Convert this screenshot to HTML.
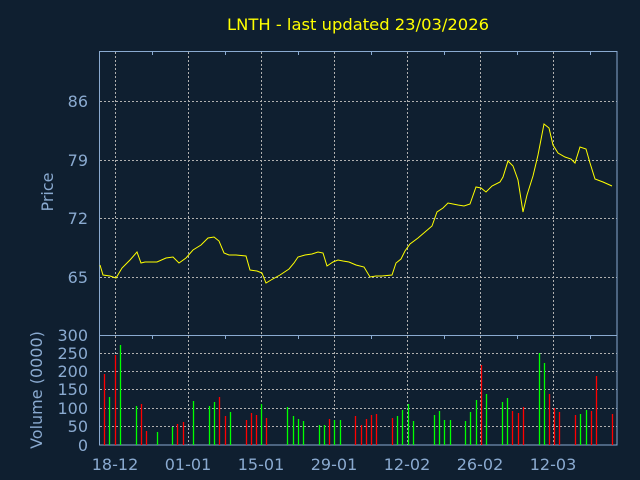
<!DOCTYPE html>
<html><head><meta charset="utf-8"><style>
html,body{margin:0;padding:0;background:#0f1f30;}
svg{display:block}
text{font-family:"DejaVu Sans","Liberation Sans",sans-serif;}
</style></head><body>
<svg width="640" height="480" viewBox="0 0 640 480" xmlns="http://www.w3.org/2000/svg">
<rect width="640" height="480" fill="#0f1f30"/>
<text x="358" y="30" fill="#ffff00" font-size="16" text-anchor="middle" textLength="262" lengthAdjust="spacingAndGlyphs">LNTH - last updated 23/03/2026</text>
<g stroke="#b0b0b0" stroke-width="1" stroke-dasharray="2,2" fill="none">
<path d="M115.5 52V445M188.5 52V445M261.5 52V445M334.5 52V445M407.5 52V445M480.5 52V445M553.5 52V445"/>
<path d="M100 101.5H617M100 160.5H617M100 218.5H617M100 277.5H617"/>
<path d="M100 353.5H617M100 371.5H617M100 389.5H617M100 408.5H617M100 426.5H617"/>
</g>
<g stroke="#8aaad0" stroke-width="1" fill="none">
<rect x="99.5" y="51.5" width="517.5" height="393.5"/>
<path d="M99.5 335.5H617"/>
<path d="M152.5 52v3M225.5 52v3M298.5 52v3M371.5 52v3M444.5 52v3M517.5 52v3M590.5 52v3"/>
<path d="M152.5 336v3M225.5 336v3M298.5 336v3M371.5 336v3M444.5 336v3M517.5 336v3M590.5 336v3"/>
</g>
<g fill="#8aaad0" font-size="16" text-anchor="end">
<text x="88" y="107">86</text><text x="88" y="166">79</text><text x="88" y="224">72</text><text x="88" y="283">65</text>
<text x="88" y="341">300</text><text x="88" y="359">250</text><text x="88" y="377">200</text><text x="88" y="395">150</text><text x="88" y="414">100</text><text x="88" y="432">50</text><text x="88" y="451">0</text>
</g>
<g fill="#8aaad0" font-size="16" text-anchor="middle">
<text x="115" y="470">18-12</text><text x="188" y="470">01-01</text><text x="261" y="470">15-01</text><text x="334" y="470">29-01</text><text x="407" y="470">12-02</text><text x="480" y="470">26-02</text><text x="553" y="470">12-03</text>
<text transform="translate(53,192) rotate(-90)">Price</text>
<text transform="translate(42,390) rotate(-90)">Volume (0000)</text>
</g>
<polyline fill="none" stroke="#ffff00" stroke-width="1" points="100,265 103,275 110,276 116,278 122,268 130,260 137,252 141,263 145,262 157,262 166,258 173,257 179,263 186,258 193,250 201,245 208,238 214,237 219,241 224,253 229,255 236,255 246,256 250,270 257,271 262,273 266,283 271,280 280,275 289,269 294,263 298,257 305,255 312,254 318,252 323,253 327,266 333,262 338,260 343,261 349,262 356,265 364,267 370,277 376,276 382,276 392,275 396,263 401,259 405,251 410,244 418,238 425,232 432,226 437,212 443,208 448,203 458,205 464,206 470,204 476,187 481,188 486,192 492,186 500,182 503,177 508,161 513,166 518,180 523,212 527,195 533,176 538,155 544,124 549,128 553,145 558,153 565,157 571,159 575,163 580,147 586,149 590,163 595,179 603,182 612,186"/>
<g stroke-width="1.3" fill="none">
<path stroke="#ff0000" d="M104.5 445V374M115.5 445V355M141.5 445V404M146.5 445V431M177.5 445V424M183.5 445V422M219.5 445V397M225.5 445V416M246.5 445V420M251.5 445V413M256.5 445V415M266.5 445V418M329.5 445V419M355.5 445V416M361.5 445V425M366.5 445V419M371.5 445V415M376.5 445V414M392.5 445V418M481.5 445V365M512.5 445V411M518.5 445V413M523.5 445V407M549.5 445V394M554.5 445V408M559.5 445V412M575.5 445V415M591.5 445V411M596.5 445V376M612.5 445V414"/>
<path stroke="#00ff00" d="M109.5 445V397M120.5 445V345M136.5 445V406M157.5 445V432M172.5 445V427M193.5 445V401M209.5 445V406M214.5 445V402M230.5 445V412M261.5 445V404M287.5 445V407M293.5 445V416M298.5 445V419M303.5 445V421M319.5 445V425M324.5 445V425M334.5 445V420M340.5 445V420M397.5 445V416M402.5 445V410M408.5 445V404M413.5 445V421M434.5 445V415M439.5 445V411M444.5 445V420M450.5 445V420M465.5 445V421M470.5 445V412M476.5 445V400M486.5 445V394M502.5 445V402M507.5 445V398M539.5 445V353M544.5 445V363M580.5 445V414M586.5 445V410"/>
</g>
</svg>
</body></html>
